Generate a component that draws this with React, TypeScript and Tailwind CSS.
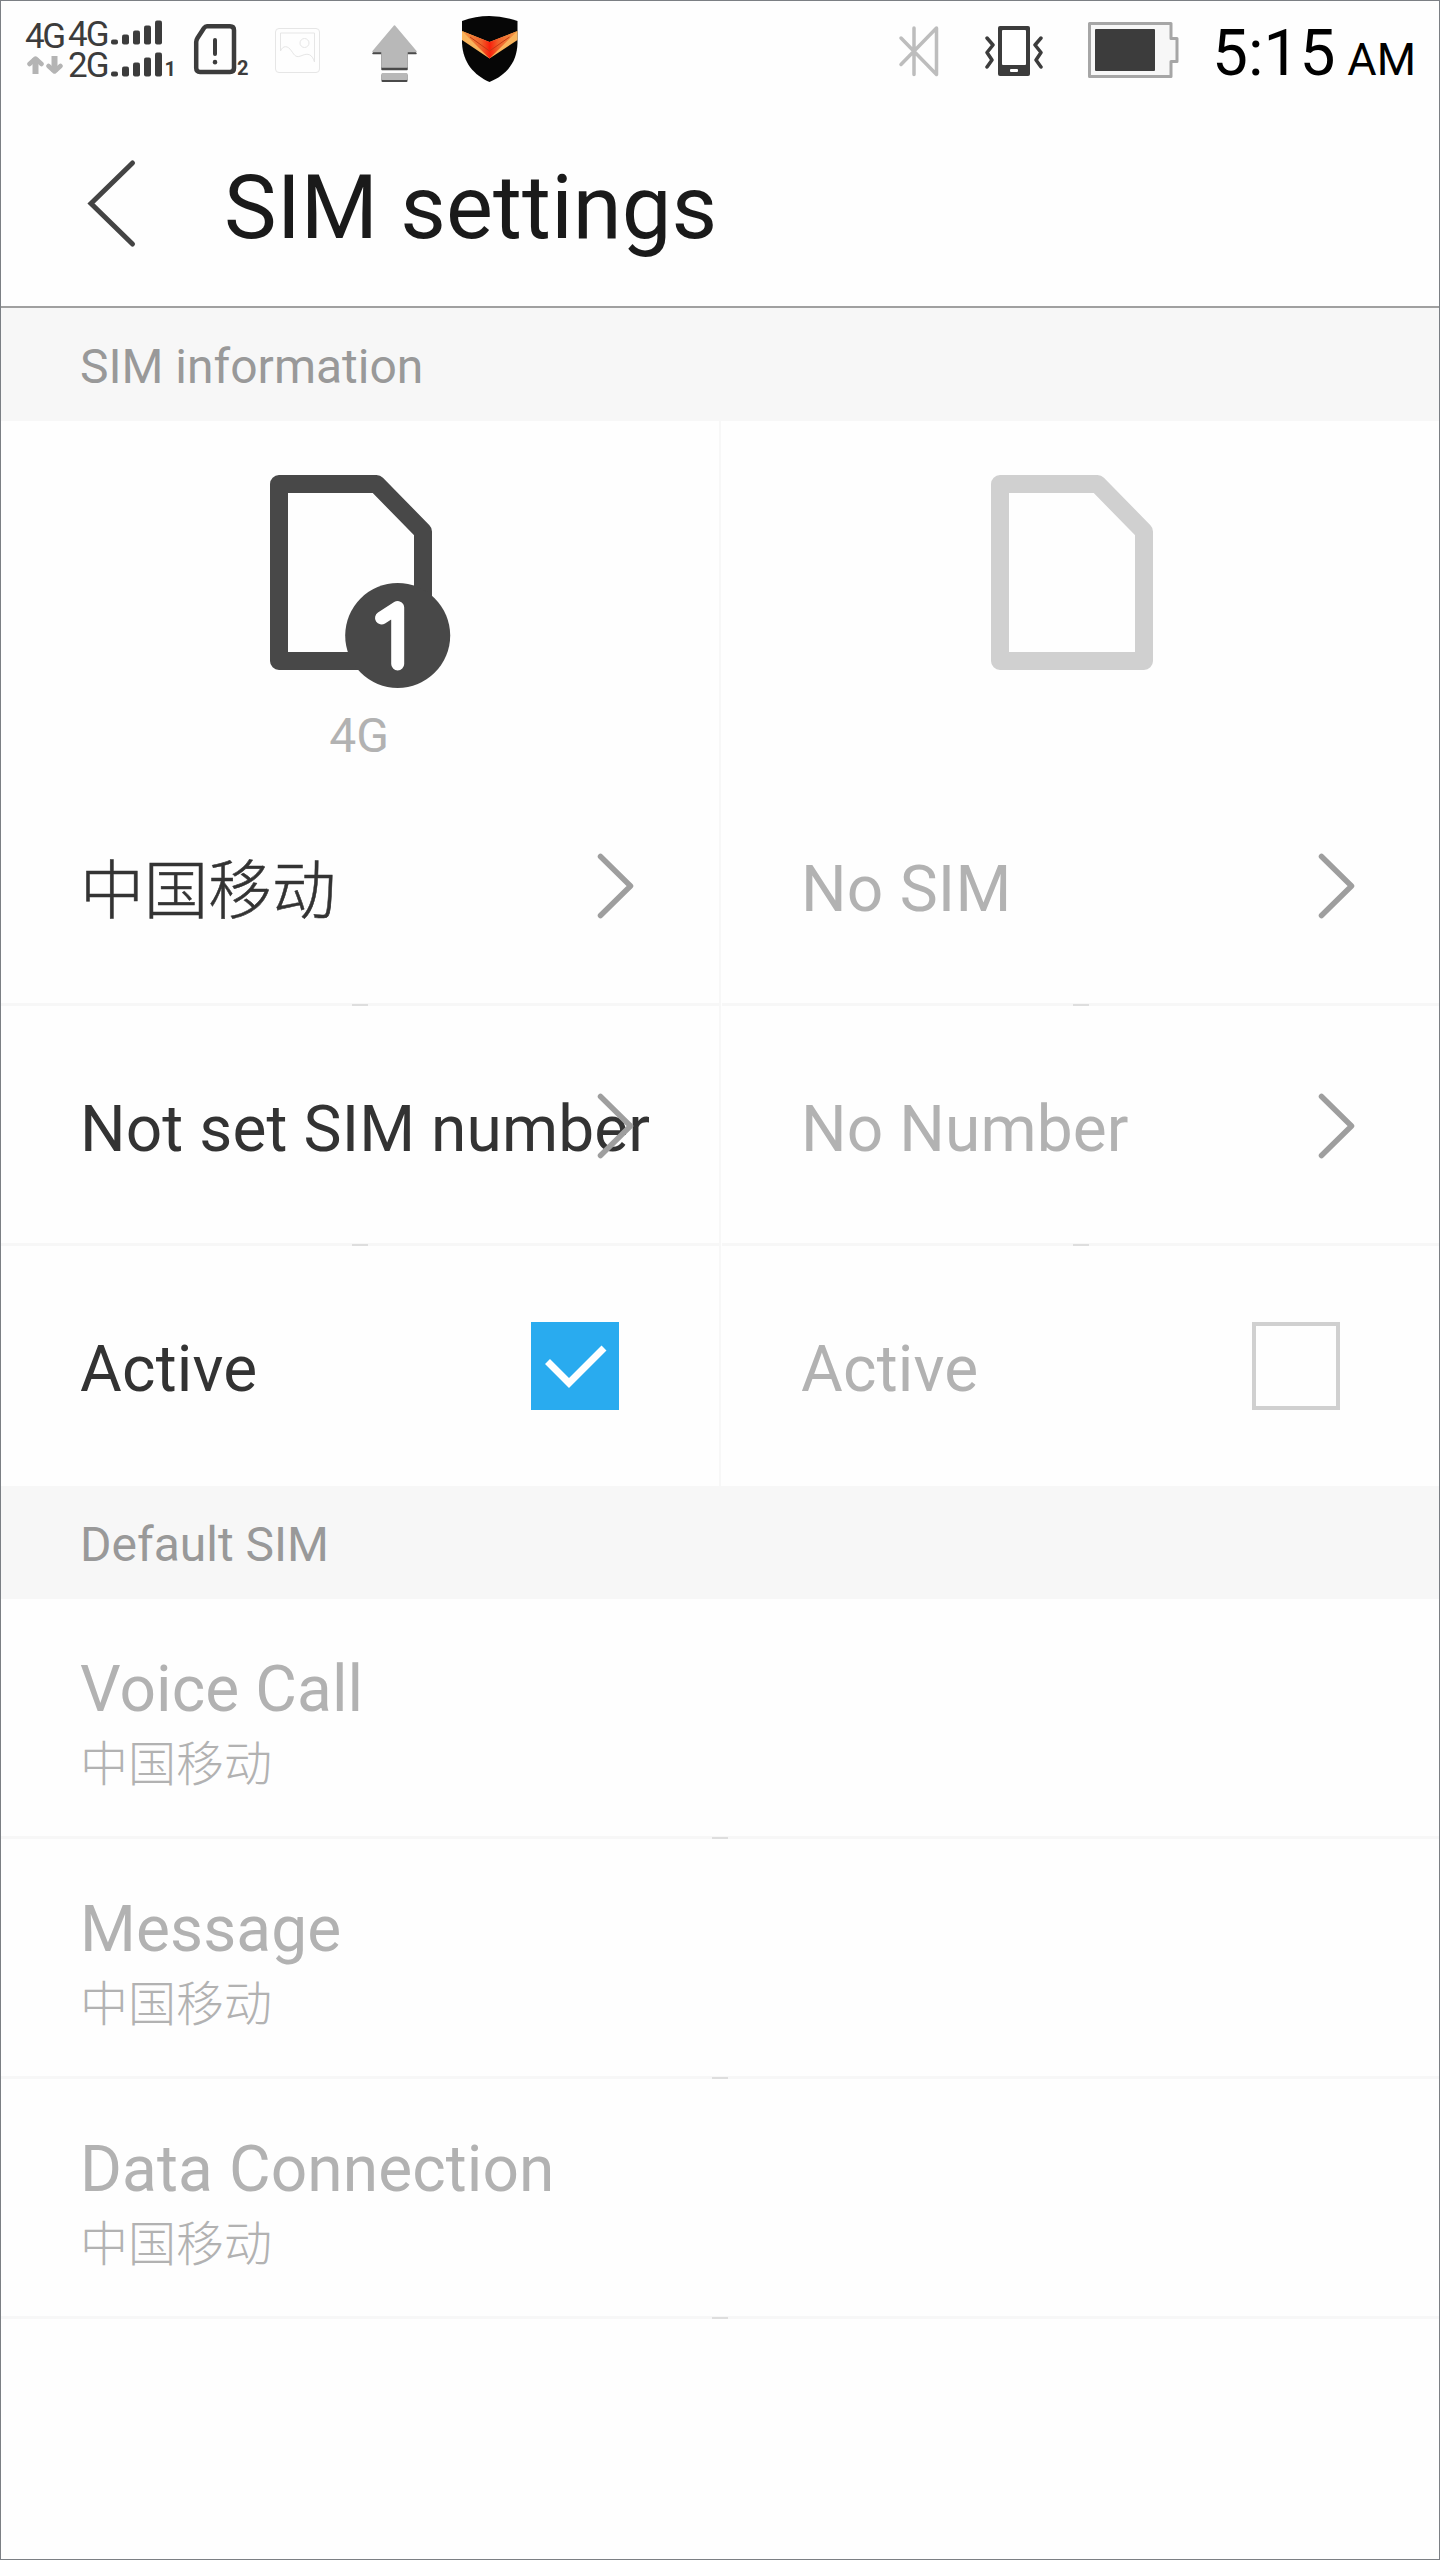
import type { ReactNode } from "react";

const CARRIER = "中国移动";

function SignalBars({ className }: { className: string }) {
  return (
    <svg className={className} width="52" height="25" viewBox="0 0 52 25" fill="#3c3c3c">
      <rect x="0" y="19.5" width="7" height="5" rx="2" />
      <rect x="11" y="14.5" width="7" height="10" rx="2" />
      <rect x="22" y="10.5" width="7" height="14" rx="2" />
      <rect x="33" y="5.5" width="7" height="19" rx="2" />
      <rect x="44" y="0.5" width="7" height="24" rx="2" />
    </svg>
  );
}

function StatusBar() {
  return (
    <div className="flex h-[99px] items-start pl-6">
      {/* Cellular block */}
      <div className="w-[41px] pt-[21px]">
        <div className="h-[33px] text-[35px] leading-[30px] tracking-[-2.5px] text-[#3c3c3c]">4G</div>
        <svg className="mt-px ml-0.5" width="36" height="18" viewBox="0 0 36 18" fill="none" stroke="#b4b4b4" strokeWidth="5" strokeLinecap="round" strokeLinejoin="round">
          <path d="M2.5 8 8.5 2.5 14.5 8" strokeWidth="4.5" />
          <path d="M8.5 5V15" strokeLinecap="square" strokeWidth="6" />
          <path d="M21.5 10 27.5 15.5 33.5 10" strokeWidth="4.5" />
          <path d="M27.5 13V3" strokeLinecap="square" strokeWidth="6" />
        </svg>
      </div>
      <div className="flex w-[110px] flex-col pt-[19px] pl-0.5 text-[#3c3c3c]">
        <div className="flex h-[31px]">
          <span className="w-[43px] text-[35px] leading-[29px] tracking-[-2px]">4G</span>
          <SignalBars className="mt-0" />
        </div>
        <div className="flex">
          <span className="w-[43px] text-[35px] leading-[29px] tracking-[-2px]">2G</span>
          <SignalBars className="mt-px" />
          <span className="ml-[1.5px] pt-[8px] text-[20px] leading-5 font-bold">1</span>
        </div>
      </div>
      <div className="flex w-[82px] pt-[22px] pl-[17px]">
        <svg width="44" height="52" viewBox="0 0 44 52" fill="none" stroke="#3c3c3c" strokeWidth="4.5" strokeLinejoin="round" strokeLinecap="round">
          <path d="M14 3.200H37Q41 3.200 41 7.200V45Q41 49 37 49H7Q3.200 49 3.200 45V19Q3.200 17 4.500 15L11 5Q12.300 3.200 14 3.200Z" />
          <path d="M22 17V31" strokeWidth="4" />
          <path d="M22 39V39.2" strokeWidth="4.5" />
        </svg>
        <span className="pt-[35px] text-[20px] leading-5 font-bold text-[#3c3c3c]">2</span>
      </div>
      <svg className="mt-[26px] ml-[16px]" width="47" height="47" viewBox="0 0 47 47" fill="none" stroke="#e6e6e6" strokeWidth="1">
        <rect x="1.5" y="1.5" width="44" height="44" rx="3.5" />
        <path d="M6.500 24V6H40.500V35C38 27 34 26 28 28.500C22 31 21 29 17.500 24C14 18.500 9 18 6.500 24Z" />
        <circle cx="30.5" cy="16" r="4.5" />
      </svg>
      <svg className="mt-[23px] ml-[50px]" width="48" height="60" viewBox="0 0 48 60">
        <path d="M23.500 3.500 45 29.500H36V45.500H11V29.500H2Z" fill="#4a4a4a" stroke="#4a4a4a" strokeWidth="1.5" strokeLinejoin="round" />
        <path d="M23.500 2 45 27.500H36V43H11V27.500H2Z" fill="#b8b8b8" stroke="#b8b8b8" strokeWidth="1.5" strokeLinejoin="round" />
        <rect x="10.5" y="50" width="26" height="8" rx="1" fill="#4a4a4a" />
        <rect x="10.5" y="49" width="26" height="7" rx="1" fill="#b8b8b8" />
      </svg>
      <svg className="mt-[14px] ml-[41px]" width="60" height="70" viewBox="0 0 60 70">
        <defs>
          <linearGradient id="chevron" x1="0" x2="1" y1="0" y2="0">
            <stop offset="0" stopColor="#f29a45" />
            <stop offset="0.35" stopColor="#f0602a" />
            <stop offset="0.5" stopColor="#f8200c" />
            <stop offset="0.65" stopColor="#f0602a" />
            <stop offset="1" stopColor="#f29a45" />
          </linearGradient>
        </defs>
        <path d="M2 6Q29 -4 57.500 6V28C57 48 46 60 29.500 67C14 60 3 48 2 28Z" fill="#060606" />
        <path d="M2 16 29.500 27 57.500 16V25L29.500 43.500 2 25Z" fill="#f9b45c" />
        <path d="M2 16 29.500 27 57.500 16 29.500 43.500Z" fill="url(#chevron)" />
        <path d="M10 22 29.500 36 49.500 22" fill="none" stroke="#c23a14" strokeWidth="1" />
      </svg>

      <div className="ml-auto flex items-start">
        <svg className="mt-6" width="44" height="54" viewBox="0 0 44 54" fill="none" stroke="#bdbdbd" strokeWidth="3.5" strokeLinecap="round" strokeLinejoin="round">
          <path d="M4 13 39.500 49.500V3L4 39.500M17 3V49.500" />
        </svg>
        <svg className="mt-[25px] ml-[42px]" width="62" height="54" viewBox="0 0 62 54" fill="none" stroke="#3c3c3c" strokeWidth="3.5" strokeLinecap="round" strokeLinejoin="round">
          <rect x="15" y="0" width="32" height="50" rx="2" fill="#3c3c3c" stroke="none" />
          <rect x="19" y="4" width="24" height="35" rx="1" fill="#fff" stroke="none" />
          <rect x="27" y="43" width="8" height="3" rx="1" fill="#fff" stroke="none" />
          <path d="M4 12 10 19 4 26.500 9 34 4 41M58 12 52 19 58 26.500 53 34 58 41" />
        </svg>
        <svg className="mt-5 ml-[42px]" width="92" height="58" viewBox="0 0 92 58">
          <path d="M2.500 2.500H84V17.500H90V40.500H84V55.500H2.500Z" fill="#f7f7f7" stroke="#a6a6a6" strokeWidth="3" strokeLinejoin="round" />
          <rect x="8" y="8" width="60" height="42" rx="1" fill="#3c3c3c" />
        </svg>
        <div className="flex w-[260px] items-baseline justify-end pt-[15px] pr-[23px] whitespace-nowrap text-black">
          <span className="text-[64px] leading-[76px]">5:15</span>
          <span className="ml-[12px] text-[45px] leading-[48px]">AM</span>
        </div>
      </div>
    </div>
  );
}

function Chevron() {
  return (
    <svg className="relative shrink-0" width="38" height="66" viewBox="0 0 38 66" fill="none" stroke="#9e9e9e" strokeWidth="5.5" strokeLinecap="round" strokeLinejoin="round">
      <path d="M3.500 3.500 33.500 33 3.500 62.500" />
    </svg>
  );
}

function SectionHeader({ children }: { children: ReactNode }) {
  return (
    <div className="flex h-[113px] items-center bg-[#f7f7f7] pt-1 pl-[79px] text-[48px] leading-none text-[#999999]">
      {children}
    </div>
  );
}

function Divider() {
  return (
    <div className="flex h-[3px] items-end justify-center bg-[#f7f7f7]">
      <div className="h-0.5 w-4 bg-[#dedede]" />
    </div>
  );
}

function SimGlyph({ color, slot }: { color: string; slot?: number }) {
  return (
    <svg width="182" height="215" viewBox="0 0 182 215">
      <path d="M9 9H106.500L153 56.500V186H9Z" fill="none" stroke={color} strokeWidth="18" strokeLinejoin="round" />
      {slot === 1 && (
        <>
          <circle cx="127.7" cy="160.5" r="52.5" fill={color} />
          <path d="M111.500 143 127.700 132.500V189" fill="none" stroke="#fff" strokeWidth="13" strokeLinecap="round" strokeLinejoin="round" />
        </>
      )}
    </svg>
  );
}

function CheckBox({ checked }: { checked: boolean }) {
  if (!checked) return <div className="size-[88px] border-4 border-[#d0d0d0]" />;
  return (
    <div className="size-[88px] bg-[#29abef]">
      <svg width="88" height="88" viewBox="0 0 88 88" fill="none" stroke="#fff" strokeWidth="7">
        <path d="M16.500 39.500 38 61 73 26" />
      </svg>
    </div>
  );
}

type Sim = { name: string; number: string; network?: string; slot?: number; active: boolean };

function SimColumn({ sim }: { sim: Sim }) {
  const tone = sim.active ? "text-[#333333]" : "text-[#b2b2b2]";
  return (
    <div className={"w-[718px] shrink-0 text-[64px] leading-none " + tone}>
      <div className="flex h-[345px] flex-col pt-[54px]">
        <div className="pl-[269px]">
          <SimGlyph color={sim.active ? "#484848" : "#d0d0d0"} slot={sim.slot} />
        </div>
        <div className="mt-3 pr-0.5 text-center text-[48px] leading-[68px] text-[#b2b2b2]">{sim.network}</div>
      </div>
      <div className="flex h-[237px] items-center pr-[84px] pl-[79px]">
        <span className={"min-w-0 flex-1 whitespace-nowrap " + (sim.active ? "pt-[15px] font-light [-webkit-text-stroke:0.5px]" : "pt-[11px] tracking-[0.2px]")}>{sim.name}</span>
        <div className="pt-[3px]"><Chevron /></div>
      </div>
      <Divider />
      <div className="flex h-[237px] items-center pr-[84px] pl-[79px]">
        <span className="min-w-0 flex-1 pt-[11px] tracking-[0.1px] whitespace-nowrap">{sim.number}</span>
        <div className="pt-[3px]"><Chevron /></div>
      </div>
      <Divider />
      <div className="flex h-[240px] items-center justify-between pr-[100px] pl-[79px]">
        <span className="pt-2 tracking-[0.2px]">Active</span>
        <CheckBox checked={sim.active} />
      </div>
    </div>
  );
}

const sims: Sim[] = [
  { name: CARRIER, number: "Not set SIM number", network: "4G", slot: 1, active: true },
  { name: "No SIM", number: "No Number", active: false },
];

export default function App() {
  return (
    <div className="h-[2560px] w-[1440px] overflow-hidden border border-[#7b7f84] bg-[#fefefe] font-['Roboto','Noto_Sans_CJK_SC',sans-serif]">
      <StatusBar />
      <header className="flex h-[208px] items-center border-b-2 border-[#a0a0a0] pl-[84px]">
        <svg width="54" height="90" viewBox="0 0 54 90" fill="none" stroke="#444444" strokeWidth="5" strokeLinecap="round">
          <path d="M47.500 5 6 45.500 47.500 86" />
        </svg>
        <h1 className="ml-[85px] pt-2.5 text-[88.5px] leading-none tracking-[0.1px] text-[#1a1a1a]">SIM settings</h1>
      </header>
      <SectionHeader>SIM information</SectionHeader>
      <div className="flex">
        <SimColumn sim={sims[0]} />
        <div className="w-[3px] shrink-0 border-l-2 border-[#f7f7f7]" />
        <SimColumn sim={sims[1]} />
      </div>
      <SectionHeader>Default SIM</SectionHeader>
      {["Voice Call", "Message", "Data Connection"].map((label) => (
        <div key={label} className="text-[#b2b2b2]">
          <div className="flex h-[237px] flex-col pt-[53px] pl-[79px]">
            <div className="text-[64px] leading-[76px] tracking-[0.1px]">{label}</div>
            <div className="mt-[5px] text-[48px] leading-[64px] font-light">{CARRIER}</div>
          </div>
          <Divider />
        </div>
      ))}
    </div>
  );
}
